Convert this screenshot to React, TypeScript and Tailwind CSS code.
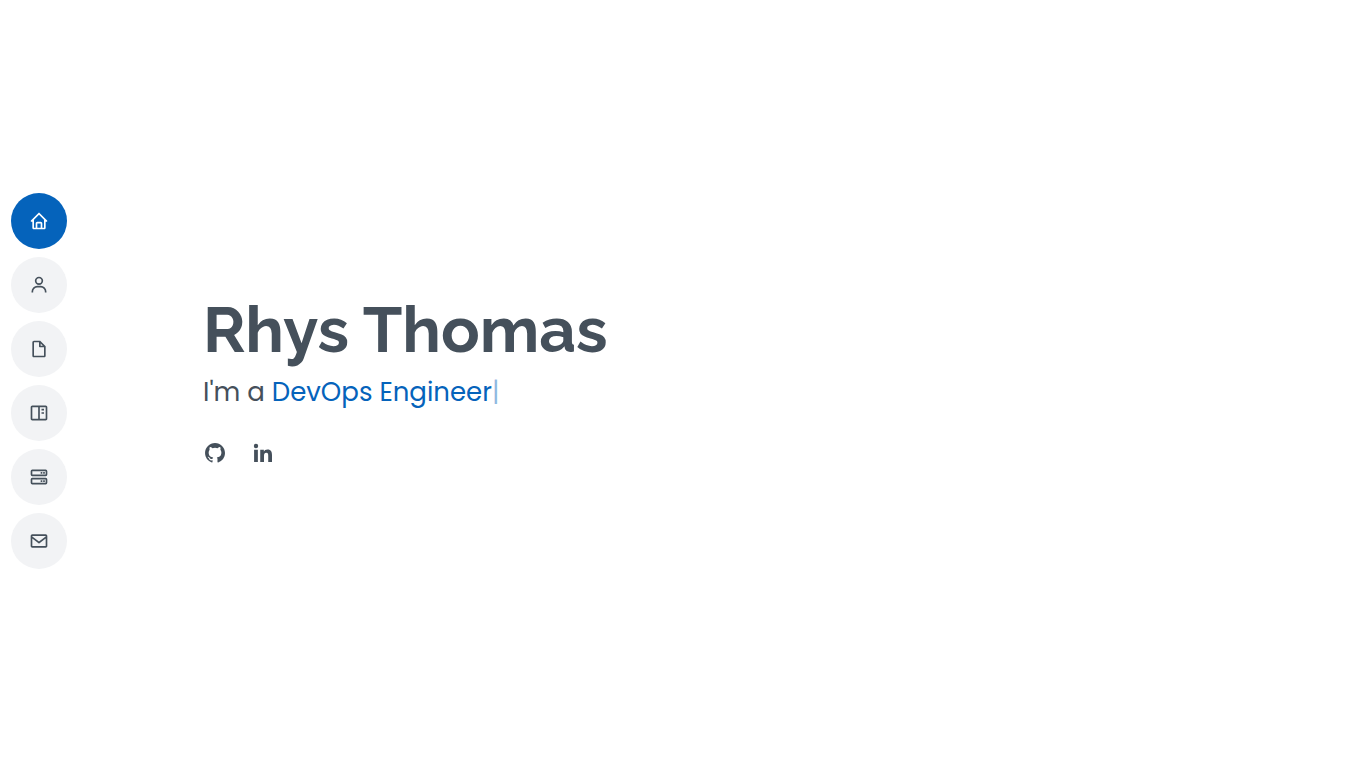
import { BiHome, BiUser, BiFileBlank, BiBookContent, BiServer, BiEnvelope, BiLogoGithub, BiLogoLinkedin } from "react-icons/bi";
import type { IconType } from "react-icons";

const links: { label: string; href: string; icon: IconType }[] = [
  { label: "Home", href: "#hero", icon: BiHome },
  { label: "About", href: "#about", icon: BiUser },
  { label: "Resume", href: "#resume", icon: BiFileBlank },
  { label: "Portfolio", href: "#portfolio", icon: BiBookContent },
  { label: "Services", href: "#services", icon: BiServer },
  { label: "Contact", href: "#contact", icon: BiEnvelope },
];

export default function App() {
  return (
    <div className="flex min-h-screen items-center bg-white font-['Open_Sans',sans-serif] text-[#45505b]">
      <header className="shrink-0 pb-[10px] pl-[11px]">
        <nav aria-label="Main">
          <ul className="flex flex-col gap-2">
            {links.map(({ label, href, icon: Icon }, i) => (
              <li key={href}>
                <a
                  href={href}
                  aria-label={label}
                  className={`flex size-14 items-center justify-center rounded-full ${i === 0 ? "bg-[#0563bb] text-white" : "bg-[#f2f3f5]"}`}
                >
                  <Icon className="size-5" />
                </a>
              </li>
            ))}
          </ul>
        </nav>
      </header>
      <main className="min-w-0 flex-1 pb-[7px] pl-[136px]">
        <h1 className="font-['Raleway',sans-serif] text-[64px] leading-[60px] font-bold">Rhys Thomas</h1>
        <p className="mt-3 font-['Poppins',sans-serif] text-[26px] leading-10">
          I'm a <span className="text-[#0563bb]">DevOps Engineer</span>
          <span aria-hidden="true" className="text-[#0563bb]/45">|</span>
        </p>
        <div className="mt-[29px] flex gap-6">
          <a href="#github" aria-label="GitHub"><BiLogoGithub className="size-6" /></a>
          <a href="#linkedin" aria-label="LinkedIn"><BiLogoLinkedin className="size-6" /></a>
        </div>
      </main>
    </div>
  );
}
